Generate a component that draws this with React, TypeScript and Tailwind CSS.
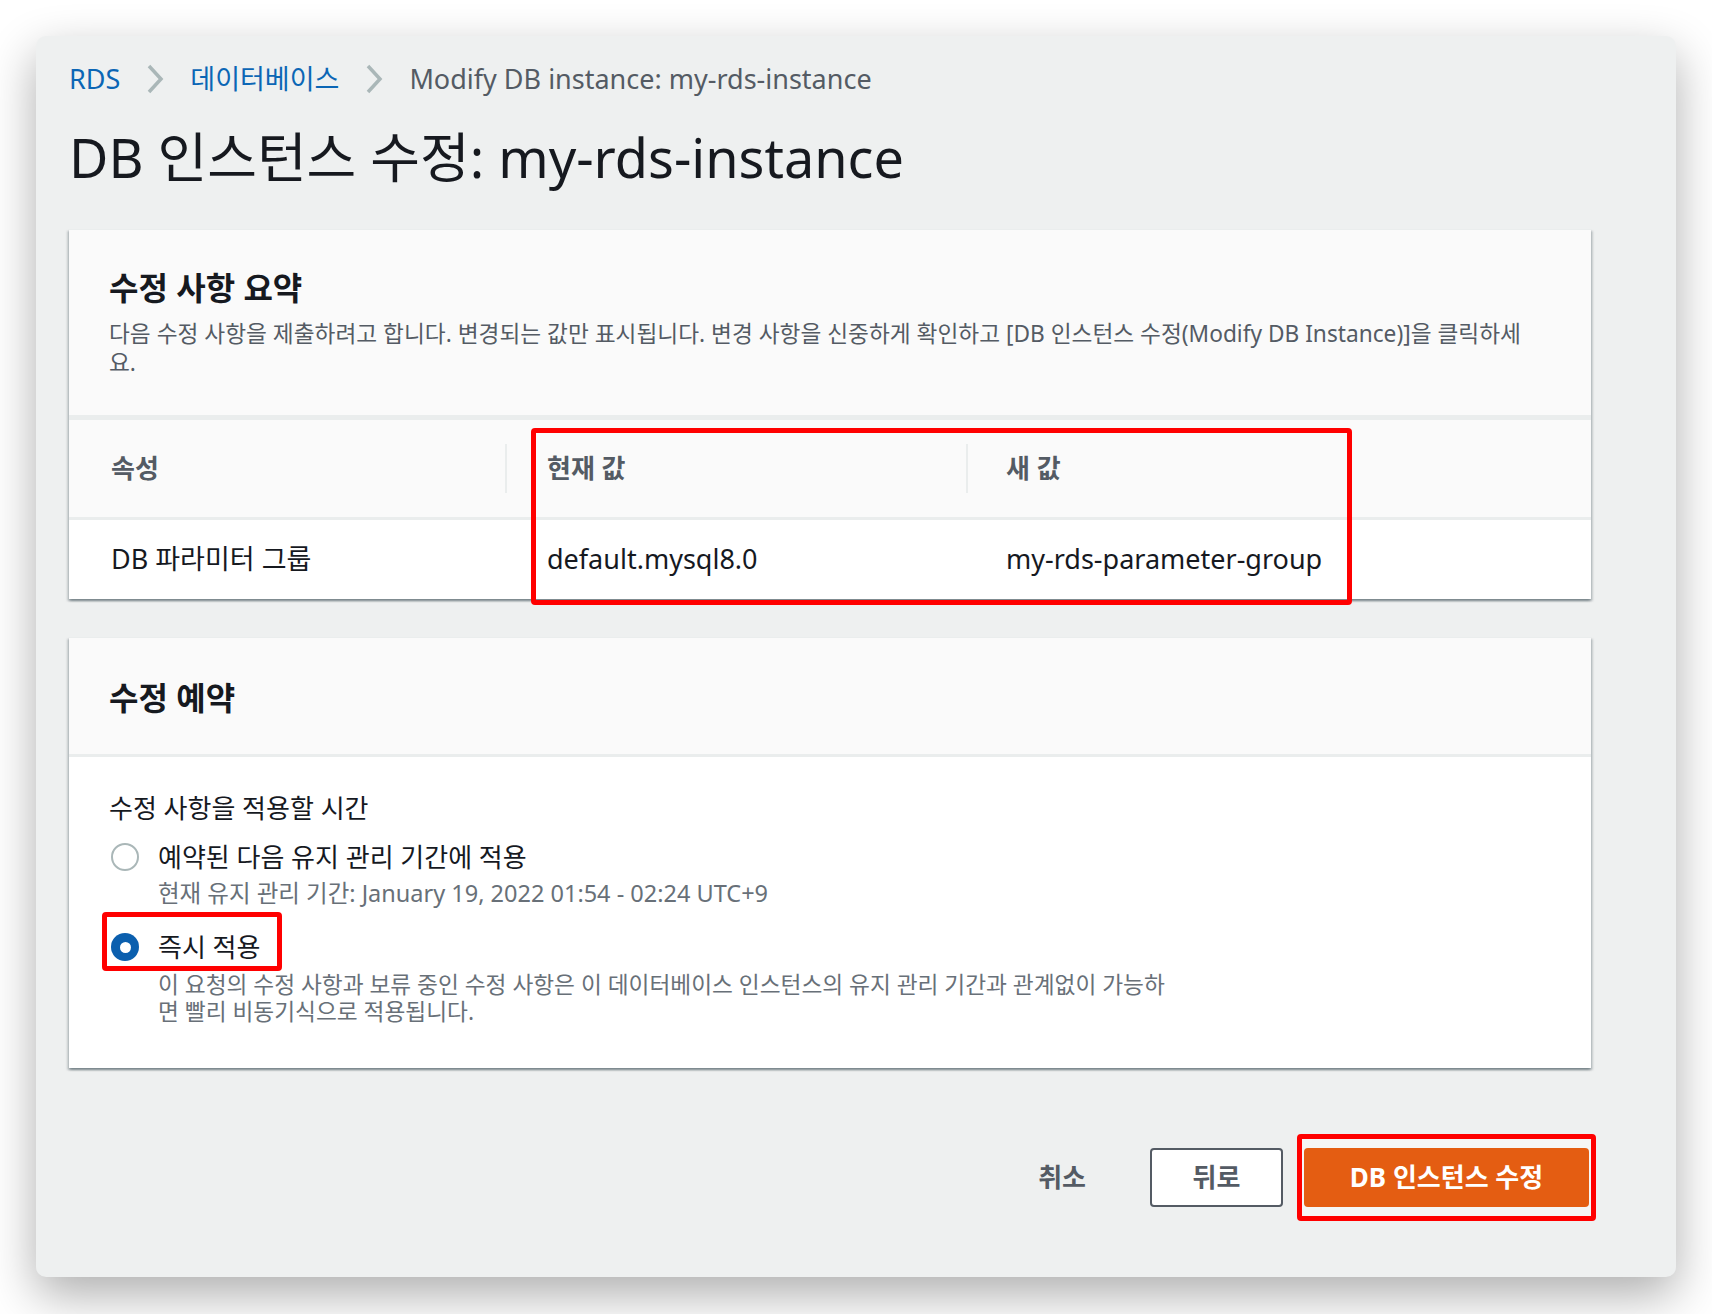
import React from "react";

const FONT = "font-['Noto_Sans','Noto_Sans_CJK_KR',sans-serif]";

function Chevron() {
  return (
    <svg width="18" height="30" viewBox="0 0 18 30" className="shrink-0">
      <polyline points="3,2 15,15 3,28" fill="none" stroke="#aab7b8" strokeWidth="3.5" />
    </svg>
  );
}

function Radio({ checked }: { checked?: boolean }) {
  if (checked) {
    return (
      <div className="flex h-[28px] w-[28px] shrink-0 items-center justify-center rounded-full bg-[#0b5fae]">
        <div className="h-[11px] w-[11px] rounded-full bg-white" />
      </div>
    );
  }
  return <div className="h-[28px] w-[28px] shrink-0 rounded-full border-2 border-[#aab7b8] bg-white" />;
}

const cardShadow =
  "shadow-[0_2px_2px_0_rgba(0,28,36,0.3),2px_2px_2px_0_rgba(0,28,36,0.15),-2px_2px_2px_0_rgba(0,28,36,0.15)]";

export default function App() {
  return (
    <div className={`min-h-[1314px] w-[1712px] bg-white p-[36px] ${FONT}`}>
      <div className="relative h-[1241px] rounded-[10px] bg-[#eef0f0] pl-[33px] pr-[85px] pt-[25px] shadow-[0_18px_48px_rgba(0,0,0,0.32)]">
        {/* breadcrumb */}
        <div className="flex h-[36px] items-center gap-[26px] text-[27px]">
          <span className="text-[#0b66b5]">RDS</span>
          <Chevron />
          <span className="text-[#0b66b5]">데이터베이스</span>
          <Chevron />
          <span className="text-[#545b64]">Modify DB instance: my-rds-instance</span>
        </div>

        <h1 className="mt-[28px] h-[64px] text-[54px] leading-[64px] text-[#16191f]">
          DB 인스턴스 수정: my-rds-instance
        </h1>

        {/* summary card */}
        <div className={`mt-[40px] bg-white ${cardShadow}`}>
          <div className="border-t border-[#eaeded] bg-[#fafafa] px-[40px] pb-[38px] pt-[38px]">
            <h2 className="text-[32px] font-bold leading-[40px] text-[#16191f]">수정 사항 요약</h2>
            <p className="mt-[11px] text-[22.7px] leading-[29px] text-[#545b64]">
              다음 수정 사항을 제출하려고 합니다. 변경되는 값만 표시됩니다. 변경 사항을 신중하게 확인하고 [DB 인스턴스
              수정(Modify DB Instance)]을 클릭하세
              <br />요.
            </p>
          </div>
          <div className="border-t-[5px] border-[#eaeded]">
            <div className="grid h-[97px] grid-cols-[436px_461px_1fr] items-center bg-[#fafafa] text-[26px] font-bold text-[#545b64]">
              <div className="pl-[42px]">속성</div>
              <div className="flex items-center">
                <div className="h-[49px] w-[2px] bg-[#eaeded]" />
                <span className="pl-[40px]">현재 값</span>
              </div>
              <div className="flex items-center">
                <div className="h-[49px] w-[2px] bg-[#eaeded]" />
                <span className="pl-[38px]">새 값</span>
              </div>
            </div>
            <div className="grid h-[82px] grid-cols-[436px_461px_1fr] items-center border-t-[3px] border-[#eaeded] bg-white text-[27px] text-[#16191f]">
              <div className="pl-[42px]">DB 파라미터 그룹</div>
              <div className="pl-[42px]">default.mysql8.0</div>
              <div className="pl-[40px]">my-rds-parameter-group</div>
            </div>
          </div>
        </div>

        {/* schedule card */}
        <div className={`mt-[38px] bg-white ${cardShadow}`}>
          <div className="border-t border-[#eaeded] bg-[#fafafa] px-[40px] pb-[34px] pt-[38px]">
            <h2 className="text-[32px] font-bold leading-[44px] text-[#16191f]">수정 예약</h2>
          </div>
          <div className="border-t-[3px] border-[#eaeded] px-[40px] pb-[43px] pt-[33px]">
            <div className="text-[26px] leading-[36px] text-[#16191f]">수정 사항을 적용할 시간</div>

            <div className="mt-[13px] flex items-center gap-[19px] pl-[2px]">
              <Radio />
              <span className="text-[26px] leading-[36px] text-[#16191f]">예약된 다음 유지 관리 기간에 적용</span>
            </div>
            <div className="mt-[4px] pl-[49px] text-[23.5px] leading-[28px] text-[#687078]">
              현재 유지 관리 기간: January 19, 2022 01:54 - 02:24 UTC+9
            </div>

            <div className="mt-[22px] flex items-center gap-[19px] pl-[2px]">
              <Radio checked />
              <span className="text-[26px] leading-[36px] text-[#16191f]">즉시 적용</span>
            </div>
            <div className="mt-[6px] pl-[49px] text-[22.7px] leading-[27px] text-[#687078]">
              이 요청의 수정 사항과 보류 중인 수정 사항은 이 데이터베이스 인스턴스의 유지 관리 기간과 관계없이 가능하
              <br />
              면 빨리 비동기식으로 적용됩니다.
            </div>
          </div>
        </div>

        {/* actions */}
        <div className="mt-[66px] flex items-center justify-end text-[26px] font-bold">
          <button className="h-[59px] px-[18px] text-[#545b64]">취소</button>
          <button className="ml-[46px] h-[59px] w-[133px] rounded-[4px] border-2 border-[#545b64] bg-white text-[#545b64]">
            뒤로
          </button>
          <div className="ml-[14px] -mr-[5px] rounded-[4px] border-[5px] border-[#ff0000] bg-[#f5f6f6] px-[2px] py-[9px]">
            <button className="h-[59px] w-[285px] rounded-[4px] bg-[#e45d12] text-white">DB 인스턴스 수정</button>
          </div>
        </div>

        {/* annotation boxes */}
        <div className="absolute left-[495px] top-[392px] h-[177px] w-[821px] rounded-[4px] border-[5px] border-[#ff0000]" />
        <div className="absolute left-[66px] top-[876px] h-[59px] w-[180px] rounded-[4px] border-[5px] border-[#ff0000]" />
      </div>
    </div>
  );
}
